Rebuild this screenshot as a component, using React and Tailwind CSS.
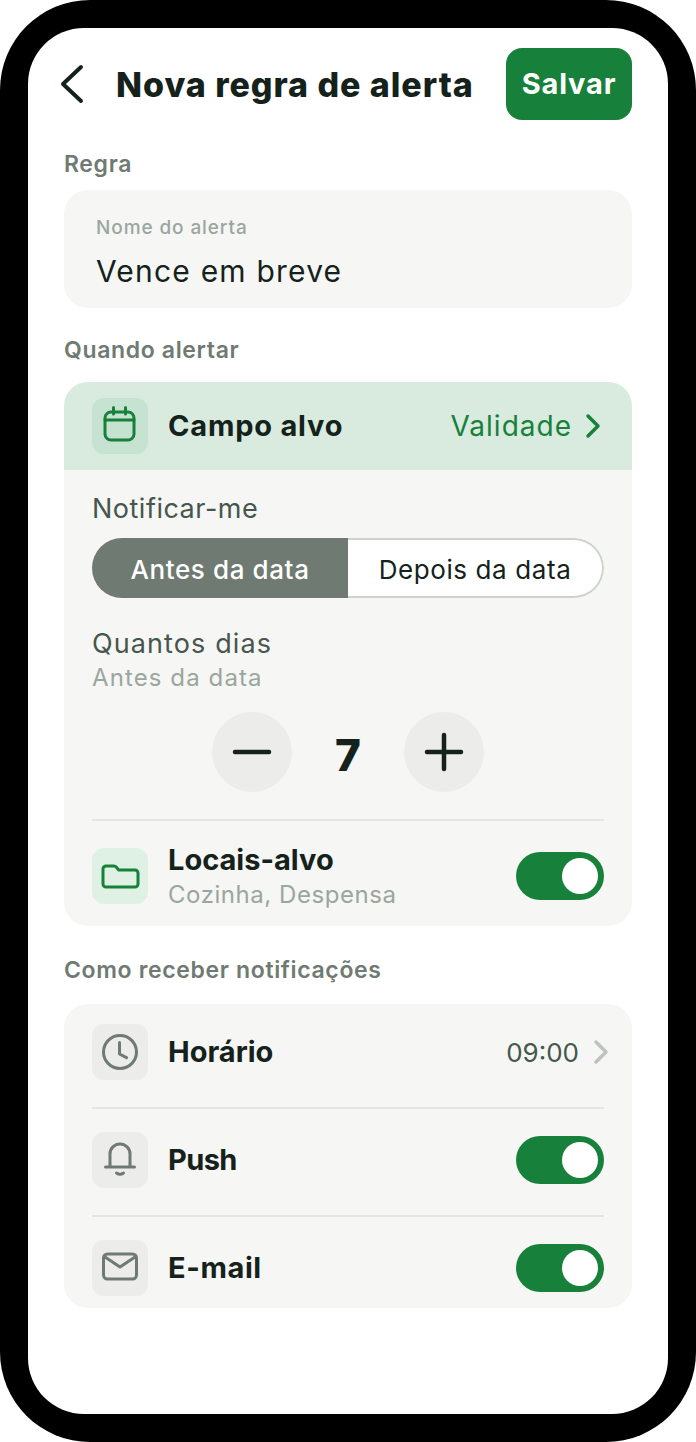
import React from "react";

const Box = ({ bg, color, children }) => (
  <div className={`w-14 h-14 rounded-[12px] shrink-0 ${bg}`}>
    <svg width="56" height="56" viewBox="0 0 56 56" fill="none" stroke={color} strokeWidth="3" strokeLinecap="round" strokeLinejoin="round">
      {children}
    </svg>
  </div>
);

const Toggle = () => (
  <div className="w-[88px] h-12 rounded-full bg-[#17803a] flex items-center justify-end pr-[6px]">
    <div className="w-9 h-9 rounded-full bg-white" />
  </div>
);

const Chevron = ({ color, className }) => (
  <svg className={className} width="18" height="26" viewBox="0 0 18 26" fill="none" stroke={color} strokeWidth="3.5" strokeLinecap="round" strokeLinejoin="round">
    <path d="M4 3l10 10L4 23" />
  </svg>
);

const Label = ({ className, children }) => (
  <div className={`h-8 flex items-center text-[23px] font-semibold text-[#6f7a72] tracking-[0.65px] ${className}`}>{children}</div>
);

const Divider = () => <div className="h-[2px] bg-[#e3e6e3]" />;

export default function App() {
  return (
    <div className="w-[696px] h-[1442px] bg-white">
      <div className="w-full h-full bg-black rounded-[90px] p-[28px] font-['Inter','Noto_Sans',sans-serif]">
        <div className="w-full h-full bg-white rounded-[56px] px-9 pt-5">
          <div className="h-[72px] flex items-center justify-between">
            <div className="flex items-center">
              <svg className="-ml-1" width="28" height="44" viewBox="0 0 28 44" fill="none" stroke="#15221b" strokeWidth="4" strokeLinecap="round" strokeLinejoin="round">
                <path d="M21 5L3 22l18 17" />
              </svg>
              <div className="ml-7 text-[34px] font-extrabold text-[#15221b] tracking-[0.95px] whitespace-nowrap">Nova regra de alerta</div>
            </div>
            <div className="w-[126px] h-[72px] rounded-[16px] bg-[#17803a] text-white text-[29px] font-bold tracking-[0.8px] flex items-center justify-center">Salvar</div>
          </div>

          <Label className="mt-7 mb-[10px]">Regra</Label>
          <div className="h-[118px] rounded-[24px] bg-[#f6f6f4] pl-8 pt-[25px]">
            <div className="text-[19px] leading-[26px] font-medium tracking-[0.9px] text-[#9aa69e]">Nome do alerta</div>
            <div className="mt-[11px] text-[30px] leading-[38px] tracking-[1.2px] text-[#15221b]">Vence em breve</div>
          </div>

          <Label className="mt-[26px] mb-4">Quando alertar</Label>
          <div className="h-[544px] rounded-[24px] bg-[#f6f6f4] overflow-hidden">
            <div className="h-[88px] bg-[#d9ebdf] px-7 flex items-center">
              <Box bg="bg-[#c6e2d0]" color="#17803a">
                <rect x="13" y="14" width="29" height="28" rx="6" />
                <path d="M13 22h29M21.5 9.5V16M33.5 9.5V16" />
              </Box>
              <div className="ml-5 text-[29px] font-bold tracking-[0.8px] text-[#15221b]">Campo alvo</div>
              <div className="ml-auto text-[28px] tracking-[1px] text-[#17803a]">Validade</div>
              <Chevron className="ml-3 mr-[2px]" color="#17803a" />
            </div>
            <div className="px-7">
              <div className="mt-[22px] h-[34px] flex items-center text-[27px] tracking-[0.5px] text-[#46564d]">Notificar-me</div>
              <div className="mt-[12px] h-[60px] flex rounded-full overflow-hidden">
                <div className="w-1/2 pt-[2px] bg-[#6f7a72] text-white text-[26px] font-medium tracking-[0.6px] flex items-center justify-center">Antes da data</div>
                <div className="w-1/2 pt-[2px] bg-white border-2 border-l-0 border-[#ccd3ce] rounded-r-full text-[#15221b] text-[26px] tracking-[0.6px] flex items-center justify-center">Depois da data</div>
              </div>
              <div className="mt-[29px] h-[34px] flex items-center text-[27px] tracking-[1.1px] text-[#46564d]">Quantos dias</div>
              <div className="mt-[1px] h-[32px] flex items-center text-[24px] tracking-[1.1px] text-[#9aa69e]">Antes da data</div>
              <div className="mt-[18px] flex items-center justify-center">
                <div className="w-20 h-20 rounded-full bg-[#ecedeb] flex items-center justify-center">
                  <svg width="44" height="44" viewBox="0 0 44 44" stroke="#15221b" strokeWidth="4.5" strokeLinecap="round"><path d="M5 22h34" /></svg>
                </div>
                <div className="w-28 pt-[6px] text-center text-[44px] font-extrabold text-[#15221b]">7</div>
                <div className="w-20 h-20 rounded-full bg-[#ecedeb] flex items-center justify-center">
                  <svg width="44" height="44" viewBox="0 0 44 44" stroke="#15221b" strokeWidth="4.5" strokeLinecap="round"><path d="M5 22h34M22 5v34" /></svg>
                </div>
              </div>
              <div className="mt-[27px]"><Divider /></div>
              <div className="mt-[27px] h-14 flex items-center">
                <Box bg="bg-[#dff1e5]" color="#17803a">
                  <path d="M11 21a3 3 0 0 1 3-3h8a3 3 0 0 1 2.2 1l2.5 3h16.3a3 3 0 0 1 3 3v11a3 3 0 0 1-3 3H14a3 3 0 0 1-3-3Z" />
                </Box>
                <div className="ml-5">
                  <div className="text-[29px] leading-[36px] font-bold text-[#15221b]">Locais-alvo</div>
                  <div className="mt-[1px] text-[24px] leading-[32px] tracking-[0.55px] text-[#9aa69e]">Cozinha, Despensa</div>
                </div>
                <div className="ml-auto"><Toggle /></div>
              </div>
            </div>
          </div>

          <Label className="mt-7 mb-[18px]">Como receber notificações</Label>
          <div className="h-[304px] rounded-[24px] bg-[#f6f6f4] px-7 pt-5">
            <div className="h-[56px] flex items-center">
              <Box bg="bg-[#ecedeb]" color="#6f7a72">
                <circle cx="28" cy="28" r="16.5" />
                <path d="M27.5 18.5V30l7 3.7" />
              </Box>
              <div className="ml-5 text-[29px] font-bold text-[#15221b]">Horário</div>
              <div className="ml-auto text-[26px] text-[#46564d]">09:00</div>
              <Chevron className="ml-[13px] -mr-[6px]" color="#bcc4be" />
            </div>
            <div className="mt-[27px] mb-[23px]"><Divider /></div>
            <div className="h-[56px] flex items-center">
              <Box bg="bg-[#ecedeb]" color="#6f7a72">
                <path d="M18 35V22a10 10 0 0 1 20 0v13M13.5 35H42.5M24.5 41q3.5 2.5 7 0" />
              </Box>
              <div className="ml-5 text-[29px] font-bold tracking-[-0.6px] text-[#15221b]">Push</div>
              <div className="ml-auto"><Toggle /></div>
            </div>
            <div className="mt-[27px] mb-[23px]"><Divider /></div>
            <div className="h-[56px] flex items-center">
              <Box bg="bg-[#ecedeb]" color="#6f7a72">
                <rect x="11.5" y="14" width="33" height="25" rx="4" />
                <path d="M13 17l15 10 15-10" />
              </Box>
              <div className="ml-5 text-[29px] font-bold tracking-[0.6px] text-[#15221b]">E-mail</div>
              <div className="ml-auto"><Toggle /></div>
            </div>
          </div>
        </div>
      </div>
    </div>
  );
}
